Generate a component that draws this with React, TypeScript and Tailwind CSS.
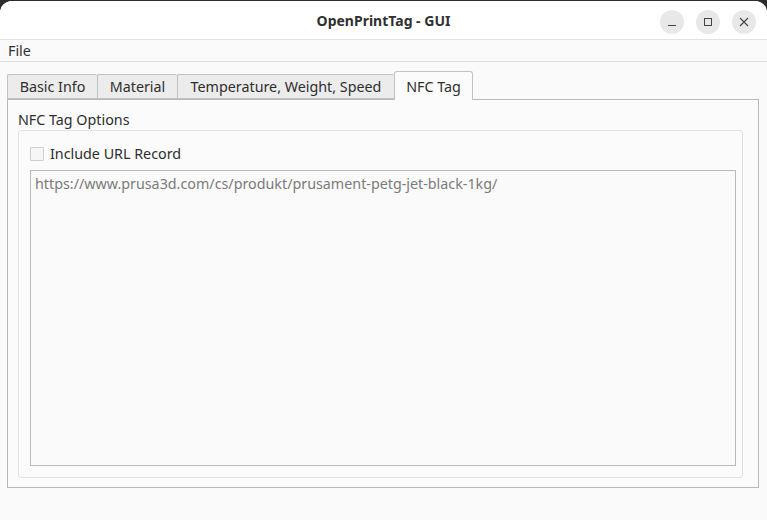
import { useState } from "react";

const tabs = [
  { label: "Basic Info", w: "w-[90px]" },
  { label: "Material", w: "w-[80px]" },
  { label: "Temperature, Weight, Speed", w: "w-[217px]" },
  { label: "NFC Tag", w: "w-[79px]" },
];

function TitleButton({ kind }: { kind: "min" | "max" | "close" }) {
  return (
    <div className="w-6 h-6 rounded-full bg-[#e8e8e8] flex items-center justify-center">
      {kind === "min" && <div className="w-[8px] h-px bg-[#444] mt-[6px]" />}
      {kind === "max" && <div className="w-[8px] h-[8px] border border-[#444]" />}
      {kind === "close" && (
        <svg width="10" height="10" viewBox="0 0 10 10">
          <path d="M1 1 L9 9 M9 1 L1 9" stroke="#444" strokeWidth="1.1" />
        </svg>
      )}
    </div>
  );
}

export default function App() {
  const [active, setActive] = useState(3);
  const [includeUrl, setIncludeUrl] = useState(false);

  return (
    <div className="w-[767px] h-[520px] bg-[#2c2c2c] pt-px overflow-hidden font-['Noto_Sans',sans-serif] text-[14.3px] text-[#2e2e2e]">
      <div className="h-[519px] rounded-t-[12px] bg-[#fafafa] flex flex-col overflow-hidden">
        {/* title bar */}
        <div className="h-[39px] bg-white border-b border-[#e2e2e2] flex items-center relative shrink-0">
          <div className="flex-1 text-center font-bold text-[14px] text-[#303030]">
            OpenPrintTag - GUI
          </div>
          <div className="absolute right-[11px] top-[9px] flex gap-[12px]">
            <TitleButton kind="min" />
            <TitleButton kind="max" />
            <TitleButton kind="close" />
          </div>
        </div>

        {/* menu bar */}
        <div className="h-[22px] border-b border-[#dedede] flex items-center px-[8px] pt-px shrink-0">
          <span className="leading-none">File</span>
        </div>

        {/* tabs */}
        <div className="px-[7px] pt-[10px] pr-[8px] flex-1 flex flex-col">
          <div className="flex items-end h-[27px] relative z-10">
            {tabs.map((t, i) =>
              i === active ? (
                <button
                  key={t.label}
                  onClick={() => setActive(i)}
                  className={`${t.w} h-[29px] -mb-px bg-[#fbfbfb] border border-[#c2c2c2] border-b-0 rounded-t-[3px] leading-none pt-[2px]`}
                >
                  {t.label}
                </button>
              ) : (
                <button
                  key={t.label}
                  onClick={() => setActive(i)}
                  className={`${t.w} h-[25px] bg-[#ececec] border border-[#c2c2c2] border-r-0 rounded-t-[2px] leading-none pt-[2px]`}
                >
                  {t.label}
                </button>
              )
            )}
          </div>
          <div className="h-[389px] border border-[#b8b8b8] bg-[#fbfbfb] pl-[10px] pr-[15px] pt-[13px] flex flex-col">
            <div className="leading-none h-[14px] mb-[3px]">NFC Tag Options</div>
            <div className="h-[348px] border border-[#e2e2e2] rounded-[3px] pl-[11px] pr-[6px] pt-[15px] flex flex-col">
              <label className="flex items-center gap-[6px] h-[16px] mb-[8px] cursor-pointer">
                <input
                  type="checkbox"
                  checked={includeUrl}
                  onChange={(e) => setIncludeUrl(e.target.checked)}
                  className="appearance-none w-[14px] h-[14px] border border-[#cfcfcf] bg-[#f6f6f6] rounded-[1px]"
                />
                <span className="leading-none">Include URL Record</span>
              </label>
              <textarea
                className="h-[296px] border border-[#b9b9b9] bg-[#fafafa] px-[4px] py-[4px] resize-none outline-none text-[#7a7a7a] leading-[18px]"
                defaultValue="https://www.prusa3d.com/cs/produkt/prusament-petg-jet-black-1kg/"
              />
            </div>
          </div>
        </div>
      </div>
    </div>
  );
}
